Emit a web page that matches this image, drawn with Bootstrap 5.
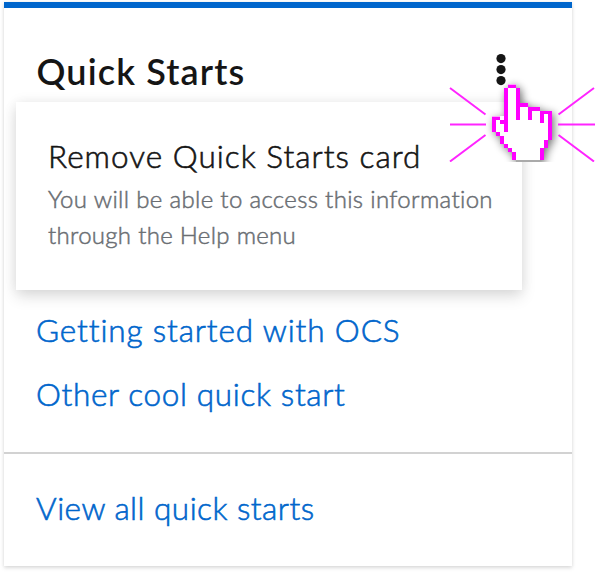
<!DOCTYPE html>
<html lang="en">
<head>
<meta charset="utf-8">
<meta name="viewport" content="width=device-width, initial-scale=1">
<title>Quick Starts</title>
<link href="https://cdn.jsdelivr.net/npm/bootstrap@5.3.0/dist/css/bootstrap.min.css" rel="stylesheet">
<style>
body{background:#fff;color:#151515;font-family:Lato,"Open Sans",sans-serif;overflow:hidden;height:572px}
.qs-card{width:568px;height:564px;margin:2px 0 0 4px;border:0;border-top:6px solid #06c;border-radius:0;box-shadow:0 2px 4px rgba(3,3,3,.13),0 0 4px rgba(3,3,3,.06)}
.qs-head{height:94px;padding:39px 32px 0 32.5px}
.qs-title{font-size:36px;line-height:48px;font-weight:600;white-space:nowrap}
.kebab{width:12px;height:34px;margin:7px 33px 0 0;padding:0}
.kebab svg,.pointer{display:block}
.qs-menu{display:block;top:94px;left:12px;width:506px;height:188px;padding:33px 0 0 32px;border:0;border-radius:0;color:#151515;box-shadow:0 7px 14px rgba(3,3,3,.12),0 0 12px rgba(3,3,3,.07)}
.menu-title,.qs-link{font-size:31.5px;line-height:42px;white-space:nowrap;font-weight:300;-webkit-text-stroke:.6px}
.menu-note{margin-top:4px;font-size:24px;line-height:36px;font-weight:300;color:#6a6e73;white-space:nowrap;-webkit-text-stroke:.5px}
.qs-body{height:350px;padding:207px 32px 0 32px}
.qs-link{color:#06c;display:block;text-decoration:none}
.qs-link+.qs-link{margin-top:22px}
.qs-foot{height:114px;padding:33px 32px 0 32px;border-top:2px solid #d2d2d2!important;background:none}
.t1{letter-spacing:1.15px}.t2{letter-spacing:1.03px}.n1{letter-spacing:.34px}.n2{letter-spacing:.3px}
.l1{letter-spacing:.87px}.l2{letter-spacing:.66px}.l3{letter-spacing:.48px}
.pointer{left:448px;top:76px;z-index:1100;pointer-events:none}
</style>
<script src="https://cdn.jsdelivr.net/npm/bootstrap@5.3.0/dist/js/bootstrap.bundle.min.js"></script>
</head>
<body class="d-flex align-items-start">
<main class="card qs-card position-relative">
  <header class="qs-head d-flex justify-content-between align-items-start">
    <h1 class="qs-title mb-0"><span class="t1">Quick Starts</span></h1>
    <button class="btn border-0 kebab" aria-label="Actions">
      <svg width="12" height="34" viewBox="0 0 12 34" fill="#151515"><circle cx="6" cy="4.6" r="4.6"/><circle cx="6" cy="15.6" r="4.6"/><circle cx="6" cy="26.6" r="4.6"/></svg>
    </button>
  </header>
  <div class="dropdown-menu show qs-menu">
    <div class="menu-title"><span class="t2">Remove Quick Starts card</span></div>
    <div class="menu-note"><span class="n1">You will be able to access this information</span><br><span class="n2">through the Help menu</span></div>
  </div>
  <div class="qs-body">
    <a class="qs-link" href="#"><span class="l1">Getting started with OCS</span></a>
    <a class="qs-link" href="#"><span class="l2">Other cool quick start</span></a>
  </div>
  <footer class="card-footer qs-foot">
    <a class="qs-link" href="#"><span class="l3">View all quick starts</span></a>
  </footer>
</main>
<svg class="pointer position-absolute" width="148" height="86" viewBox="448 76 148 86" aria-hidden="true">
  <defs><filter id="soft" x="-30%" y="-30%" width="160%" height="160%"><feGaussianBlur stdDeviation="4"/></filter></defs>
  <path d="M508 84h8v4h4v15h8v4h12v4h12v29h-4v8h-4v12h-4v2h-24v-2h-4v-8h-4v-4h-4v-4h-4v-8h-4v-4h-4v-16h8v4h4v-32h4z" fill="#000" opacity=".55" filter="url(#soft)" transform="translate(2 2)"/>
  <path d="M508 84h8v4h4v15h8v4h12v4h12v29h-4v8h-4v12h-28v-8h-4v-4h-4v-4h-4v-8h-4v-4h-4v-16h8v4h4v-32h4z" fill="#fff"/>
  <path d="M516 160h24v2h-24z" fill="#aaa"/>
  <g fill="#f0f" shape-rendering="crispEdges">
    <path d="M508 84h8v4h-8zM504 88h4v44h-4zM516 88h4v32h-4zM520 103h8v4h-8zM528 107h12v4h-12zM528 107h4v13h-4zM540 111h12v3h-12zM540 111h4v12h-4zM548 111h4v29h-4zM544 140h4v8h-4zM540 148h4v12h-4z"/>
    <path d="M492 116h8v4h-8zM492 116h4v16h-4zM500 120h4v4h-4zM496 132h4v4h-4zM500 136h4v8h-4zM504 144h4v4h-4zM508 148h4v4h-4zM512 152h4v8h-4z"/>
    <path d="M508 84h8v1h-8zM492 116h8v1h-8z" fill="#ffa0ff"/>
  </g>
  <path d="M450 88 485.500 114.500M450 124.500H486M450 161.500 485.500 135M594 88 558.500 114.500M558 124.500H595M594 161.500 558.500 135" stroke="#ff24ff" stroke-width="2" fill="none"/>
</svg>
</body>
</html>
